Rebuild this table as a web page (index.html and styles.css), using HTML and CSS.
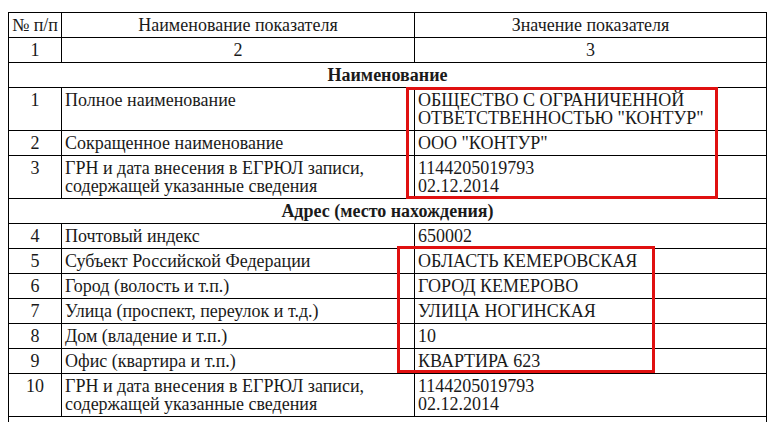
FILE: index.html
```html
<!DOCTYPE html>
<html lang="ru">
<head>
<meta charset="utf-8">
<title>Выписка</title>
<link rel="stylesheet" href="styles.css">
</head>
<body>
<div class="wrap">
  <table class="grid">
    <colgroup>
      <col class="c1"><col class="c2"><col class="c3">
    </colgroup>
    <tr class="head">
      <td class="num">№ п/п</td>
      <td class="center">Наименование показателя</td>
      <td class="center">Значение показателя</td>
    </tr>
    <tr class="head">
      <td class="num">1</td>
      <td class="center">2</td>
      <td class="center">3</td>
    </tr>
    <tr><td colspan="3" class="section">Наименование</td></tr>
    <tr>
      <td class="num">1</td>
      <td>Полное наименование</td>
      <td>ОБЩЕСТВО С ОГРАНИЧЕННОЙ<br>ОТВЕТСТВЕННОСТЬЮ "КОНТУР"</td>
    </tr>
    <tr>
      <td class="num">2</td>
      <td>Сокращенное наименование</td>
      <td>ООО "КОНТУР"</td>
    </tr>
    <tr>
      <td class="num">3</td>
      <td>ГРН и дата внесения в ЕГРЮЛ записи,<br>содержащей указанные сведения</td>
      <td>1144205019793<br>02.12.2014</td>
    </tr>
    <tr><td colspan="3" class="section">Адрес (место нахождения)</td></tr>
    <tr>
      <td class="num">4</td>
      <td>Почтовый индекс</td>
      <td>650002</td>
    </tr>
    <tr>
      <td class="num">5</td>
      <td>Субъект Российской Федерации</td>
      <td>ОБЛАСТЬ КЕМЕРОВСКАЯ</td>
    </tr>
    <tr>
      <td class="num">6</td>
      <td>Город (волость и т.п.)</td>
      <td>ГОРОД КЕМЕРОВО</td>
    </tr>
    <tr>
      <td class="num">7</td>
      <td>Улица (проспект, переулок и т.д.)</td>
      <td>УЛИЦА НОГИНСКАЯ</td>
    </tr>
    <tr>
      <td class="num">8</td>
      <td>Дом (владение и т.п.)</td>
      <td>10</td>
    </tr>
    <tr>
      <td class="num">9</td>
      <td>Офис (квартира и т.п.)</td>
      <td>КВАРТИРА 623</td>
    </tr>
    <tr>
      <td class="num">10</td>
      <td>ГРН и дата внесения в ЕГРЮЛ записи,<br>содержащей указанные сведения</td>
      <td>1144205019793<br>02.12.2014</td>
    </tr>
    <tr><td colspan="3" class="section">&nbsp;</td></tr>
  </table>
  <div class="mark mark-name"></div>
  <div class="mark mark-addr"></div>
</div>
</body>
</html>
```

FILE: styles.css
```css
html, body {
  margin: 0;
  padding: 0;
  background: #ffffff;
  overflow: hidden;
}

body {
  font-family: "Liberation Serif", "Times New Roman", serif;
  font-size: 18px;
  color: #1a1a1a;
}

.wrap {
  position: relative;
  padding: 12px 0 0 8px;
}

.grid {
  border-collapse: collapse;
  table-layout: fixed;
  width: 758px;
  font-family: "Liberation Serif", "Times New Roman", serif;
  font-size: 18px;
}

.c1 { width: 53px; }
.c2 { width: 353px; }
.c3 { width: 352px; }

.grid td {
  border: 1px solid #000;
  padding: 3px 3px 3px 3px;
  line-height: 18px;
  vertical-align: top;
  text-align: left;
  white-space: nowrap;
  overflow: hidden;
}

.grid td.num,
.grid td.center {
  text-align: center;
}

.grid td.section {
  text-align: center;
  font-weight: bold;
}

.mark {
  position: absolute;
  border: 3px solid #e01010;
  pointer-events: none;
}

.mark-name {
  left: 406px;
  top: 87px;
  width: 306px;
  height: 106px;
}

.mark-addr {
  left: 397px;
  top: 246px;
  width: 252px;
  height: 121px;
}
```
